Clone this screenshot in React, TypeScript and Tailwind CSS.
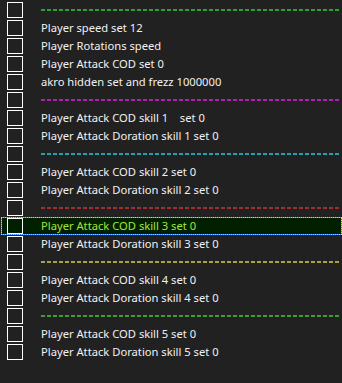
import React from "react";

type Row =
  | { kind: "text"; label: string; selected?: boolean }
  | { kind: "line"; color: string };

const rows: Row[] = [
  { kind: "line", color: "#33cc33" },
  { kind: "text", label: "Player speed set 12" },
  { kind: "text", label: "Player Rotations speed" },
  { kind: "text", label: "Player Attack COD set 0" },
  { kind: "text", label: "akro hidden set and frezz 1000000" },
  { kind: "line", color: "#dd22dd" },
  { kind: "text", label: "Player Attack COD skill 1    set 0" },
  { kind: "text", label: "Player Attack Doration skill 1 set 0" },
  { kind: "line", color: "#22ccdd" },
  { kind: "text", label: "Player Attack COD skill 2 set 0" },
  { kind: "text", label: "Player Attack Doration skill 2 set 0" },
  { kind: "line", color: "#cc3333" },
  { kind: "text", label: "Player Attack COD skill 3 set 0", selected: true },
  { kind: "text", label: "Player Attack Doration skill 3 set 0" },
  { kind: "line", color: "#ddcc44" },
  { kind: "text", label: "Player Attack COD skill 4 set 0" },
  { kind: "text", label: "Player Attack Doration skill 4 set 0" },
  { kind: "line", color: "#44cc33" },
  { kind: "text", label: "Player Attack COD skill 5 set 0" },
  { kind: "text", label: "Player Attack Doration skill 5 set 0" },
];

function DashedLine({ color }: { color: string }) {
  return (
    <svg className="h-[2px] flex-1" preserveAspectRatio="none">
      <line x1="0" y1="1" x2="100%" y2="1" stroke={color} strokeWidth="1.5" strokeDasharray="4 2" />
    </svg>
  );
}

export default function App() {
  return (
    <div
      className="w-[342px] h-[383px] bg-[#212121] pt-[1px] pl-[1px] overflow-hidden"
      style={{ fontFamily: '"Noto Sans", "Open Sans", sans-serif' }}
    >
      {rows.map((row, i) => {
        const selected = row.kind === "text" && row.selected;
        return (
          <div
            key={i}
            className={`relative flex items-center h-[18px] pl-[6px] ${
              selected ? "bg-[#002000] outline outline-1 -outline-offset-1 outline-[#2f7fff]" : ""
            }`}
          >
            <div className="w-4 h-4 border-[1.5px] border-white shrink-0" />
            <div className="ml-[18px] flex-1 flex items-center pr-[2px]">
              {row.kind === "line" ? (
                <DashedLine color={row.color} />
              ) : (
                <span
                  className={`whitespace-pre text-[11.2px] leading-none ${
                    selected ? "text-[#a6e43c]" : "text-[#f2f2f2]"
                  }`}
                >
                  {row.label}
                </span>
              )}
            </div>
            {selected && (
              <div className="absolute inset-0 border border-dotted border-[#c8e83c] pointer-events-none" />
            )}
          </div>
        );
      })}
    </div>
  );
}
